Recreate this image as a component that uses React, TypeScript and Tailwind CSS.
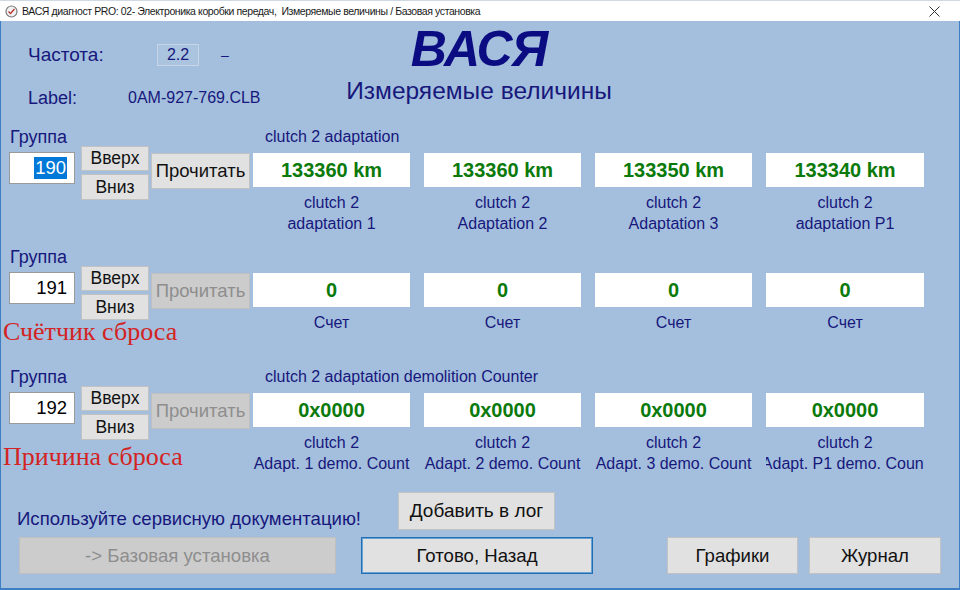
import React from "react";

const NAVY = "text-[#17177c]";

function Btn({
  children,
  className = "",
  disabled = false,
}: {
  children: React.ReactNode;
  className?: string;
  disabled?: boolean;
}) {
  return (
    <div
      className={
        "flex items-center justify-center border whitespace-nowrap " +
        (disabled
          ? "bg-[#cccccc] border-[#bfbfbf] text-[#8e8e8e] "
          : "bg-[#e1e1e1] border-[#c2c2c2] text-[#111111] ") +
        className
      }
    >
      {children}
    </div>
  );
}

type BlockProps = {
  group: string;
  selected?: boolean;
  disabled?: boolean;
  title: string;
  values: string[];
  line1: string[];
  line2?: string[];
  red?: string;
  redMt?: string;
};

function Block({ group, selected, disabled, title, values, line1, line2, red, redMt = "" }: BlockProps) {
  return (
    <div className="flex h-[120px] shrink-0">
      <div className="w-[253px] shrink-0 flex flex-col">
        <div className={"pl-[10px] text-[18px] leading-[18px] " + NAVY}>Группа</div>
        <div className="flex">
          <div className="ml-[9px] mt-[6px] w-[66px] h-[32px] bg-white border border-[#9a9a9a] flex items-center justify-end pr-[7px] text-[18.5px] text-black">
            {selected ? (
              <span className="bg-[#0078d7] text-white leading-[22px] px-[1px]">{group}</span>
            ) : (
              <span>{group}</span>
            )}
          </div>
          <div className="ml-[6px] flex flex-col gap-[3px]">
            <Btn className="w-[68px] h-[25px] text-[17.5px]">Вверх</Btn>
            <Btn className="w-[68px] h-[26px] text-[17.5px]">Вниз</Btn>
          </div>
          <Btn disabled={disabled} className="ml-[2px] mt-[7px] w-[99px] h-[36px] text-[18.5px]">
            Прочитать
          </Btn>
        </div>
        {red ? (
          <div className={"pl-[3px] text-[26px] leading-[24px] text-[#d42323] font-['Liberation_Serif','Times_New_Roman',serif] whitespace-nowrap " + redMt}>
            {red}
          </div>
        ) : null}
      </div>
      <div className="flex flex-col">
        <div className={"pl-[12px] h-[18px] text-[16px] leading-[18px] whitespace-nowrap " + NAVY}>{title}</div>
        <div className="mt-[7px] grid grid-cols-[157px_157px_157px_158px] gap-x-[14px]">
          {values.map((v, i) => (
            <div key={i} className="flex flex-col">
              <div className="h-[34px] bg-white flex items-center justify-center text-[20px] font-bold text-[#0b7a0b]">
                {v}
              </div>
              <div className={"mt-[5px] flex justify-center overflow-hidden whitespace-nowrap text-[16px] leading-[21px] " + NAVY}>
                <span>{line1[i]}</span>
              </div>
              {line2 ? (
                <div className={"flex justify-center overflow-hidden whitespace-nowrap text-[16px] leading-[21px] " + NAVY}>
                  <span className="shrink-0">{line2[i]}</span>
                </div>
              ) : null}
            </div>
          ))}
        </div>
      </div>
    </div>
  );
}

export default function App() {
  return (
    <div className="w-[960px] h-[590px] overflow-hidden bg-[#a3bfdd] flex flex-col font-['Liberation_Sans',Arial,sans-serif] shadow-[inset_1px_0_0_#3d7fc2,inset_-1px_0_0_#3d7fc2,inset_0_-2px_0_#3d7fc2]">
      {/* Title bar */}
      <div className="h-[21px] shrink-0 bg-white flex items-center border-t border-[#cfd9e3]">
        <svg className="ml-[5px]" width="13" height="13" viewBox="0 0 13 13">
          <circle cx="6.5" cy="6.5" r="5.5" fill="#f2f2f2" stroke="#7b7b7b" strokeWidth="1.2" />
          <path d="M3.5 6.5 L5.5 8.5 L9.5 4" fill="none" stroke="#b33" strokeWidth="1.3" />
        </svg>
        <div className="ml-[4px] text-[10.5px] text-[#1a1a1a] whitespace-nowrap leading-[21px] tracking-[-0.4px]">
          ВАСЯ диагност PRO: 02- Электроника коробки передач,&nbsp; Измеряемые величины / Базовая установка
        </div>
        <div className="ml-auto mr-[8px] w-[36px] flex justify-center">
          <svg width="11" height="11" viewBox="0 0 11 11">
            <path d="M0.5 0.5 L10.5 10.5 M10.5 0.5 L0.5 10.5" stroke="#333" strokeWidth="1" />
          </svg>
        </div>
      </div>

      {/* Header */}
      <div className="h-[107px] shrink-0 flex">
        <div className="w-[300px] shrink-0 flex flex-col pl-[28px]">
          <div className="mt-[23px] h-[22px] flex items-center">
            <div className={"w-[129px] text-[19px] leading-[22px] " + NAVY}>Частота:</div>
            <div className={"w-[42px] h-[22px] flex items-center justify-center border border-[#c6d6e8] bg-[#aac4e0] text-[16px] " + NAVY}>
              2.2
            </div>
            <div className={"ml-[22px] text-[14px] " + NAVY}>–</div>
          </div>
          <div className="mt-[21px] h-[22px] flex items-center">
            <div className={"w-[100px] text-[18px] leading-[22px] " + NAVY}>Label:</div>
            <div className={"text-[16px] leading-[22px] " + NAVY}>0AM-927-769.CLB</div>
          </div>
        </div>
        <div className="w-[358px] shrink-0 flex flex-col items-center">
          <div className="mt-[3px] h-[50px] text-[50px] leading-[50px] font-bold italic tracking-[-1px] text-[#0c0c82]">
            ВАСЯ
          </div>
          <div className={"mt-[3px] text-[24.5px] leading-[28px] " + NAVY}>Измеряемые величины</div>
        </div>
      </div>

      <Block
        group="190"
        selected
        title="clutch 2 adaptation"
        values={["133360 km", "133360 km", "133350 km", "133340 km"]}
        line1={["clutch 2", "clutch 2", "clutch 2", "clutch 2"]}
        line2={["adaptation 1", "Adaptation 2", "Adaptation 3", "adaptation P1"]}
      />
      <Block
        group="191"
        disabled
        title=""
        values={["0", "0", "0", "0"]}
        line1={["Счет", "Счет", "Счет", "Счет"]}
        red="Счётчик сброса"
      />
      <Block
        group="192"
        disabled
        title="clutch 2 adaptation demolition Counter"
        values={["0x0000", "0x0000", "0x0000", "0x0000"]}
        line1={["clutch 2", "clutch 2", "clutch 2", "clutch 2"]}
        line2={["Adapt. 1 demo. Count", "Adapt. 2 demo. Count", "Adapt. 3 demo. Count", "Adapt. P1 demo. Count"]}
        red="Причина сброса"
        redMt="mt-[5px]"
      />

      {/* Bottom */}
      <div className="h-[44px] shrink-0 flex items-start">
        <div className={"w-[398px] shrink-0 pl-[17px] mt-[20px] text-[18.6px] leading-[22px] whitespace-nowrap " + NAVY}>
          Используйте сервисную документацию!
        </div>
        <Btn className="mt-[4px] w-[157px] h-[38px] text-[19px]">Добавить в лог</Btn>
      </div>
      <div className="mt-[5px] flex">
        <Btn disabled className="ml-[19px] w-[317px] h-[37px] text-[18.6px]">
          -&gt; Базовая установка
        </Btn>
        <div className="ml-[25px] w-[232px] h-[37px] flex items-center justify-center bg-[#e1e1e1] border border-[#1f6fb2] shadow-[inset_0_0_0_1px_#6aa2d6] text-[18.6px] text-[#111111]">
          Готово, Назад
        </div>
        <Btn className="ml-[74px] w-[131px] h-[37px] text-[18.6px]">Графики</Btn>
        <Btn className="ml-[11px] w-[132px] h-[37px] text-[18.6px]">Журнал</Btn>
      </div>
    </div>
  );
}
